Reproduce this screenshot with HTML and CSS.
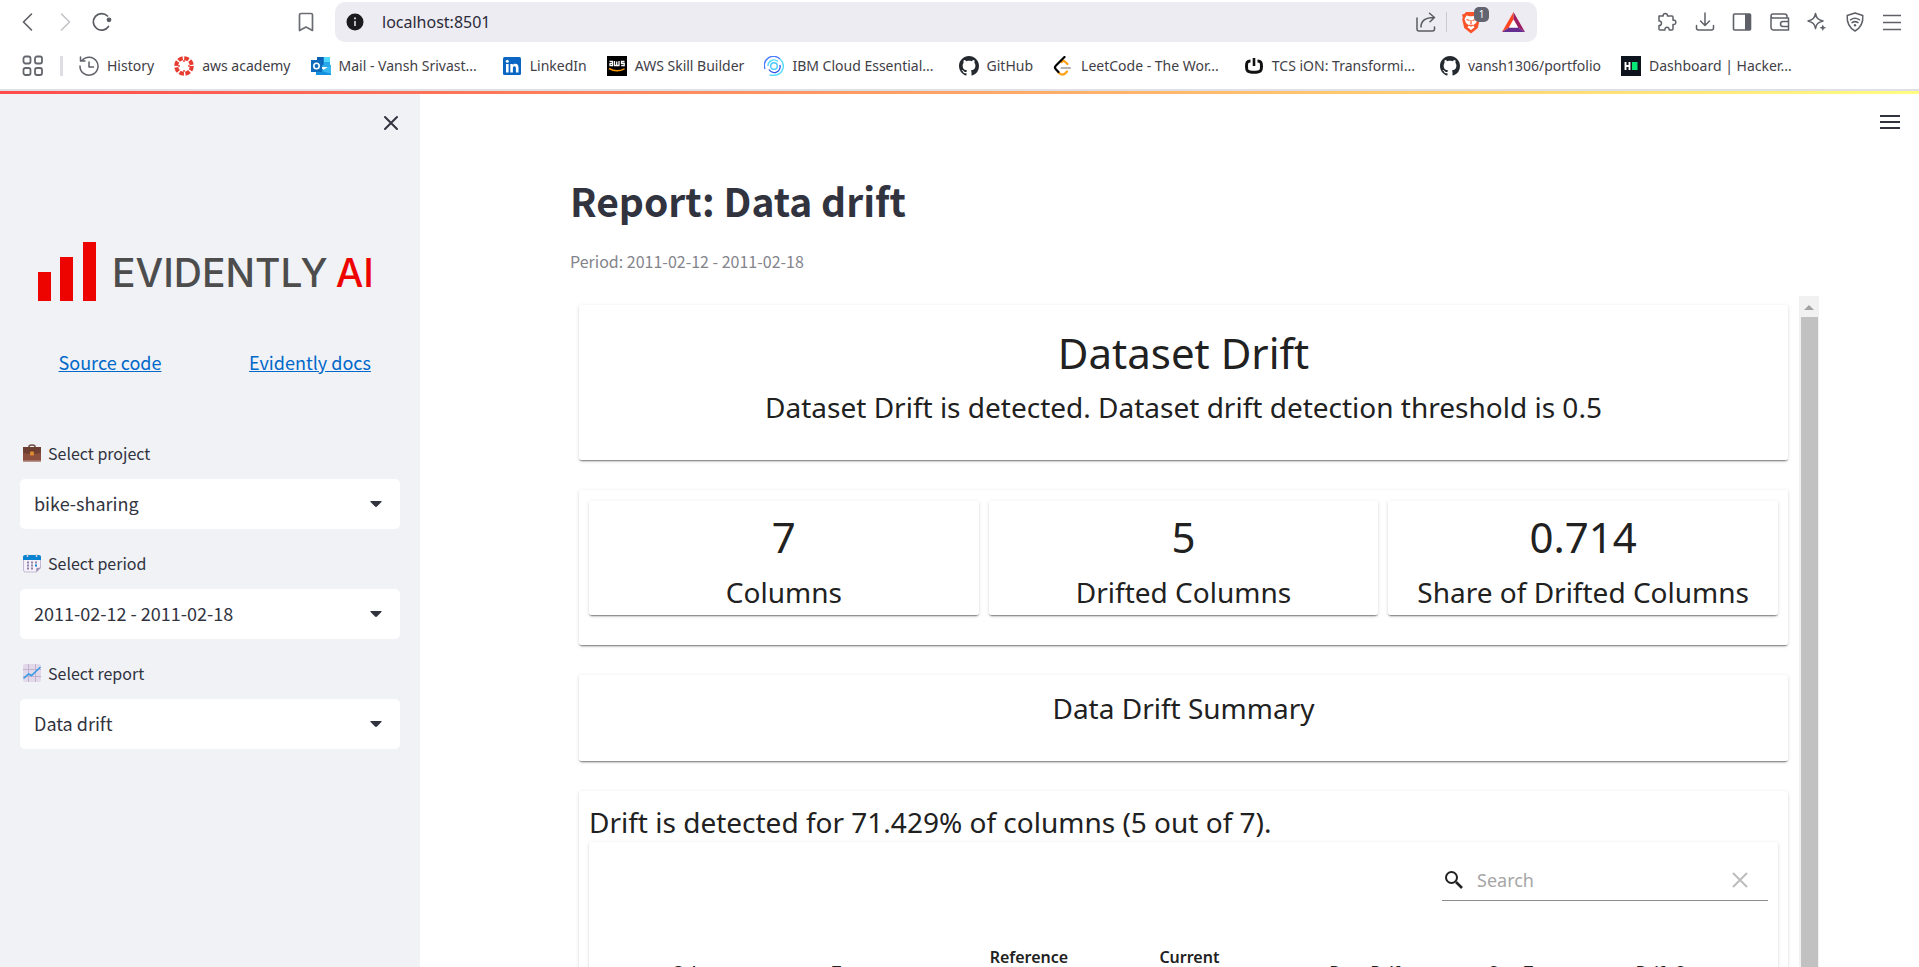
FILE: index.html
```html
<!DOCTYPE html>
<html lang="en">
<head>
<meta charset="utf-8">
<title>Report: Data drift</title>
<link rel="stylesheet" href="styles.css">
</head>
<body>
<svg class="defs" aria-hidden="true">
  <symbol id="github" viewBox="0 0 16 16"><path fill="#24292f" d="M8 0C3.58 0 0 3.58 0 8c0 3.54 2.29 6.53 5.47 7.59.4.07.55-.17.55-.38 0-.19-.01-.82-.01-1.49-2.01.37-2.53-.49-2.69-.94-.09-.23-.48-.94-.82-1.13-.28-.15-.68-.52-.01-.53.63-.01 1.08.58 1.23.82.72 1.21 1.87.87 2.33.66.07-.52.28-.87.51-1.07-1.78-.2-3.64-.89-3.64-3.95 0-.87.31-1.59.82-2.15-.08-.2-.36-1.02.08-2.12 0 0 .67-.21 2.2.82.64-.18 1.32-.27 2-.27s1.36.09 2 .27c1.53-1.04 2.2-.82 2.2-.82.44 1.1.16 1.92.08 2.12.51.56.82 1.27.82 2.15 0 3.07-1.87 3.75-3.65 3.95.29.25.54.73.54 1.48 0 1.07-.01 1.93-.01 2.2 0 .21.15.46.55.38A8.01 8.01 0 0 0 16 8c0-4.42-3.58-8-8-8z"/></symbol>
  <symbol id="caret" viewBox="0 0 12 6"><path fill="#31333f" d="M1 0h10c.6 0 .8.6.4 1L7 5.500c-.5.5-1.500.5-2 0L.6 1C.2.6.4 0 1 0z"/></symbol>
</svg>

<header class="browser">
  <div class="toolbar">
    <nav class="nav-buttons" aria-label="Navigation">
      <button type="button" aria-label="Back"><svg width="20" height="20" viewBox="0 0 20 20"><path d="M13.500 2 5.500 10l8 8" fill="none" stroke="#5a5c63" stroke-width="1.600" stroke-linecap="round" stroke-linejoin="round"/></svg></button>
      <button type="button" aria-label="Forward"><svg width="20" height="20" viewBox="0 0 20 20"><path d="M6.500 2l8 8-8 8" fill="none" stroke="#c2c3c7" stroke-width="1.600" stroke-linecap="round" stroke-linejoin="round"/></svg></button>
      <button type="button" aria-label="Reload"><svg width="20" height="20" viewBox="0 0 20 20"><path d="M15.500 4A8.300 8.300 0 1 0 16.500 14.500" fill="none" stroke="#5a5c63" stroke-width="1.700" stroke-linecap="round"/><circle cx="17" cy="7.800" r="2.400" fill="#5a5c63"/></svg></button>
    </nav>
    <button type="button" class="save" aria-label="Bookmark this page"><svg width="20" height="20" viewBox="0 0 20 20"><path d="M3.500 3a1.500 1.500 0 0 1 1.500-1.500h10A1.500 1.500 0 0 1 16.500 3v15.500L10 15l-6.500 3.500z" fill="none" stroke="#6b6d74" stroke-width="1.700" stroke-linejoin="round"/></svg></button>
    <div class="address">
      <svg width="18" height="18" viewBox="0 0 18 18"><circle cx="9" cy="9" r="8.500" fill="#1b1b1f"/><path d="M9 8v5" stroke="#c9c9d0" stroke-width="1.800"/><circle cx="9" cy="5.400" r="1.100" fill="#c9c9d0"/></svg>
      <input type="text" aria-label="Address" value="localhost:8501">
      <button type="button" aria-label="Share"><svg width="20" height="20" viewBox="0 0 20 20"><g fill="none" stroke="#5a5c63" stroke-width="1.500" stroke-linecap="round" stroke-linejoin="round"><path d="M1 6v11a2 2 0 0 0 2 2h13.500a2 2 0 0 0 2-2v-2"/><path d="M5 15c0-6 4-9.500 13-9.500M13.500 1.200 18.500 5.500 14 9.800"/></g></svg></button>
      <span class="divider"></span>
      <button type="button" class="shields" aria-label="Brave Shields"><svg width="20" height="23" viewBox="0 0 20 23"><path fill="#fb542b" d="M5 1h10l1.800 2 2.200.5-.8 3 .6 2-2 8.500L10 22.500 3.200 17 1.200 8.500l.6-2-.8-3L3.200 3z"/><path fill="#fff" d="m5.500 4.500 3 .7h3l3-.7 2 3.500-1.500 4-3 2.200 1.500 2L10 19l-3.500-2.800 1.500-2L5 12 3.500 8z"/><path fill="none" stroke="#fb542b" stroke-width="1.200" d="m5.500 8.500 3 1M14.500 8.500l-3 1M10 9v4.500M8 14l2 1 2-1"/></svg><span class="badge">1</span></button>
      <button type="button" aria-label="Brave Rewards"><svg width="23" height="20" viewBox="0 0 23 20"><path fill="#ff4724" d="M11.500 0 0 20l7-4.500 4.500-8z"/><path fill="#9e1f63" d="M11.500 0 23 20l-7-4.500-4.500-8z"/><path fill="#662d91" d="M0 20h23l-7-4.500H7z"/><path fill="#fff" d="M11.500 7.500 7 15.500h9z"/></svg></button>
    </div>
    <div class="tools">
      <button type="button" aria-label="Extensions"><svg width="20" height="20" viewBox="0 0 20 20"><path d="M2 4h4.200c-.7-3.300 4.800-3.300 4.200 0H15a1 1 0 0 1 1 1v3.200c3.800-.8 3.800 5 0 4.300V17a1 1 0 0 1-1 1h-2.800c.5-3.700-4.800-3.700-4.300 0H3a1 1 0 0 1-1-1v-3.500c3.300.3 3.300-4.800 0-4.500z" fill="none" stroke="#5f6168" stroke-width="1.500" stroke-linejoin="round"/></svg></button>
      <button type="button" aria-label="Downloads"><svg width="20" height="20" viewBox="0 0 20 20"><path d="M10 1v12M5.500 9l4.500 4.500L14.500 9M1.500 13.500V16a2 2 0 0 0 2 2h13a2 2 0 0 0 2-2v-2.500" fill="none" stroke="#5f6168" stroke-width="1.500" stroke-linecap="round" stroke-linejoin="round"/></svg></button>
      <button type="button" aria-label="Sidebar"><svg width="20" height="20" viewBox="0 0 20 20"><rect x="1.500" y="2" width="17" height="16" rx="1" fill="none" stroke="#5f6168" stroke-width="1.600"/><path fill="#5f6168" d="M13 2h5.500v16H13z"/></svg></button>
      <button type="button" aria-label="Wallet"><svg width="20" height="20" viewBox="0 0 20 20"><g fill="none" stroke="#5f6168" stroke-width="1.500" stroke-linejoin="round"><path d="M1 15.500V4a2 2 0 0 1 2-2h11.500A2.500 2.500 0 0 1 17 4.500V6H3a2 2 0 0 1-2-2M1 15.500A2.500 2.500 0 0 0 3.500 18H18.500V6H16M18.500 9.500h-5.500a2.200 2.200 0 0 0 0 5h5.500"/></g></svg></button>
      <button type="button" aria-label="Leo AI"><svg width="20" height="20" viewBox="0 0 20 20"><path d="M8.500 1.500c.8 4.500 2.500 6.200 7.500 7.500-5 1.300-6.700 3-7.500 7.500C7.700 12 6 10.300 1 9c5-1.300 6.700-3 7.500-7.500z" fill="none" stroke="#5f6168" stroke-width="1.500" stroke-linejoin="round"/><path fill="#5f6168" d="m15.800 12.500 1 2.200 2.400 1-2.400 1-1 2.400-1-2.400-2.300-1 2.300-1z"/></svg></button>
      <button type="button" aria-label="VPN"><svg width="20" height="20" viewBox="0 0 20 20"><g fill="none" stroke="#5f6168" stroke-width="1.500" stroke-linecap="round" stroke-linejoin="round"><path d="M10 1 17.800 3.500c.5 7-1.500 12-7.800 15.500C3.700 15.500 1.700 10.500 2.200 3.500z"/><path d="M5.500 7.800c3-2 6-2 9 0M7 10.600c2-1.300 4-1.300 6 0"/></g><circle cx="10" cy="13.200" r="1.200" fill="#5f6168"/></svg></button>
      <button type="button" aria-label="Menu"><svg width="20" height="20" viewBox="0 0 20 20"><path d="M1 3.500h18M1 10.500h18M1 17.500h18" stroke="#5f6168" stroke-width="1.500"/></svg></button>
    </div>
  </div>

  <nav class="bookmarks" aria-label="Bookmarks">
    <button type="button" aria-label="Tab groups"><svg width="22" height="22" viewBox="0 0 22 22"><g fill="none" stroke="#64666d" stroke-width="1.800"><rect x="1.500" y="1.500" width="7" height="7" rx="2"/><rect x="13" y="1.500" width="7" height="7" rx="2"/><rect x="1.500" y="13" width="7" height="7" rx="2"/><rect x="13" y="13" width="7" height="7" rx="2"/></g></svg></button>
    <span class="divider"></span>
    <a href="#"><svg width="20" height="20" viewBox="0 0 20 20"><g fill="none" stroke="#5f6168" stroke-width="1.500" stroke-linecap="round" stroke-linejoin="round"><path d="M3 4.500A9 9 0 1 1 1 10M1.500 1v4h4.500M10 6v5h4.500"/></g></svg>History</a>
    <a href="#"><svg width="20" height="20" viewBox="0 0 20 20"><circle cx="10" cy="10" r="7.800" fill="none" stroke="#e63b2e" stroke-width="4" stroke-dasharray="4.600 1.526"/><g fill="#e63b2e"><circle cx="10" cy="5" r=".9"/><circle cx="15" cy="10" r=".9"/><circle cx="10" cy="15" r=".9"/><circle cx="5" cy="10" r=".9"/></g></svg>aws academy</a>
    <a href="#" class="clipped"><svg width="20" height="20" viewBox="0 0 20 20"><path fill="#28a8ea" d="M6 1h13v10H6z"/><path fill="#0a5fb4" d="M6 1h6.500v8H6z"/><path fill="#50d9ff" d="M13 1h6v5h-6z"/><path fill="#1490df" d="M5 9l8 5 7-5v10H5z"/><path fill="#35b8f1" d="m20 9-9 6 9 3z"/><path fill="#0f6cbd" d="M0 4h11v12H0z"/><circle cx="5.500" cy="10" r="2.700" fill="none" stroke="#fff" stroke-width="1.600"/></svg>Mail - Vansh Srivast...</a>
    <a href="#"><svg width="20" height="20" viewBox="0 0 20 20"><rect x="1" y="1" width="18" height="18" rx="1.500" fill="#0a66c2"/><g fill="#fff"><circle cx="5.300" cy="5.200" r="1.500"/><path d="M4 8h2.600v8.500H4zM8.300 8h2.500v1.200c1.300-2.200 5.700-2.100 5.700 2.200v5.100h-2.600v-4.600c0-2.300-3-2.200-3 .1v4.500H8.300z"/></g></svg>LinkedIn</a>
    <a href="#"><svg width="20" height="20" viewBox="0 0 20 20"><path d="M0 0h20v20H0z"/><g fill="none" stroke="#fff" stroke-width="1.300"><path d="M2.500 5.500h3v4.200H3V7.600h2.500M7.500 5v4.500h2.200V5.500v4H12V5M17.500 5.500h-3v2h2.700v2.200h-3"/></g><path fill="none" stroke="#f90" stroke-width="1.500" d="M2 12.500c5 3 10.500 3 15.500.3"/></svg>AWS Skill Builder</a>
    <a href="#" class="clipped"><svg width="20" height="20" viewBox="0 0 20 20"><g fill="none" stroke-width="1.400"><path stroke="#4a7cff" d="M1 13A9.200 9.200 0 0 1 16 3"/><path stroke="#55dcff" d="M16 3a9.200 9.200 0 0 1-5 16.200H5.500M4 10a6 6 0 0 1 10-4.500"/><path stroke="#2f56e8" d="M16 9a6 6 0 0 1-11 4.500"/><circle cx="10" cy="10" r="3.300" stroke="#48c9ff"/></g></svg>IBM Cloud Essential...</a>
    <a href="#"><svg width="20" height="20"><use href="#github"/></svg>GitHub</a>
    <a href="#" class="clipped"><svg width="20" height="20" viewBox="0 0 20 20"><g fill="none" stroke-width="2.200" stroke-linecap="round" stroke-linejoin="round"><path stroke="#ffa116" d="M8.500 6l2-1.500 4 3.500M5 16c3 3.500 6 3.500 9-.500"/><path stroke="#b3b3b3" d="M8.500 12h8.500"/><path stroke="#000" d="M11.500 1 3 9.500c-1.500 1.500-1.500 2.500 0 4L5.500 16"/></g></svg>LeetCode - The Wor...</a>
    <a href="#" class="clipped"><svg width="20" height="20" viewBox="0 0 20 20"><path d="M6.500 5C3 5 2.500 6.500 2.500 10.500S3 16.200 10 16.200s7.500-1.700 7.500-5.700S17 5 13.500 5" fill="none" stroke="#111" stroke-width="3"/><path d="M10 2v8" stroke="#111" stroke-width="2.600"/></svg>TCS iON: Transformi...</a>
    <a href="#"><svg width="20" height="20"><use href="#github"/></svg>vansh1306/portfolio</a>
    <a href="#" class="clipped"><svg width="20" height="20" viewBox="0 0 20 20"><path fill="#0e141e" d="M0 0h20v20H0z"/><path fill="none" stroke="#fff" stroke-width="1.900" d="M4.500 6v8M8.500 6v8M4.500 10h4"/><path fill="#05e776" d="M11 6h5.500v8H11z"/></svg>Dashboard | Hacker...</a>
  </nav>
</header>

<div class="app">
  <aside class="sidebar">
    <button type="button" class="close" aria-label="Close sidebar"><svg width="16" height="16" viewBox="0 0 16 16"><path d="m2 2 12 12M14 2 2 14" stroke="#31333f" stroke-width="2" stroke-linecap="round"/></svg></button>
    <div class="logo">
      <svg width="60" height="60" viewBox="0 0 60 60" fill="#ed0400"><path d="M1 30h13v29H1zM23 15h13v44H23zM46 0h13v59H46z"/></svg>
      <span class="wordmark"><span>EVIDENTLY</span> <span class="accent">AI</span></span>
    </div>
    <div class="links">
      <a href="#">Source code</a>
      <a href="#">Evidently docs</a>
    </div>
    <form class="filters">
      <div class="field">
        <label for="project"><svg width="20" height="20" viewBox="0 0 20 20"><path d="M7 5V3.500C7 1.500 13 1.500 13 3.500V5" fill="none" stroke="#6b4a3e" stroke-width="1.500"/><rect x="1" y="4" width="18" height="15" rx="1.500" fill="#8b4f3d"/><path fill="#6d3f31" d="M1 4h18v5.500c-6 2-12 2-18 0z"/><path fill="#b9968c" d="M1 17.500h18V19H1z"/><rect x="8" y="8.500" width="4" height="4" rx="1" fill="#e08a2e"/></svg>Select project</label>
        <div class="select"><select id="project"><option>bike-sharing</option></select><svg width="12" height="6"><use href="#caret"/></svg></div>
      </div>
      <div class="field">
        <label for="period"><svg width="20" height="20" viewBox="0 0 20 20"><path fill="#f5f0fa" stroke="#c5b9d2" d="M1.500 4h17v11l-4 4h-11a2 2 0 0 1-2-2z"/><path fill="#0a84d0" d="M1 4a2 2 0 0 1 2-2h14a2 2 0 0 1 2 2v3H1z"/><path fill="#9d8eae" d="m14 19 .5-4 4.500-.5z"/><path stroke="#d5d0dc" stroke-width="1.500" d="M5.500 1v3M14.500 1v3"/><path stroke="#9282a6" stroke-width="2" stroke-dasharray="2 2" d="M5 9.500h10M5 12.500h8M5 15.500h8"/><path fill="#0a84d0" d="M13 11.500h2v2h-2z"/></svg>Select period</label>
        <div class="select"><select id="period"><option>2011-02-12 - 2011-02-18</option></select><svg width="12" height="6"><use href="#caret"/></svg></div>
      </div>
      <div class="field">
        <label for="report"><svg width="20" height="20" viewBox="0 0 20 20"><rect x="1" y="1" width="18" height="18" rx="2" fill="#e1d8ea"/><path stroke="#c2b2cf" d="M6.500 1v18M13.500 1v18M1 6.500h18M1 13.500h18"/><path d="m1.500 15.500 5-4.500 3 1.500L18.500 4" fill="none" stroke="#2f9be6" stroke-width="1.500"/></svg>Select report</label>
        <div class="select"><select id="report"><option>Data drift</option></select><svg width="12" height="6"><use href="#caret"/></svg></div>
      </div>
    </form>
  </aside>

  <main class="main">
    <button type="button" class="app-menu" aria-label="App menu"><svg width="20" height="14" viewBox="0 0 20 14"><path d="M0 1h20M0 7h20M0 13h20" stroke="#31333f" stroke-width="2"/></svg></button>
    <h1>Report: Data drift</h1>
    <p class="caption">Period: 2011-02-12 - 2011-02-18</p>
    <div class="frame">
      <div class="report">
        <section class="card intro">
          <h2>Dataset Drift</h2>
          <p>Dataset Drift is detected. Dataset drift detection threshold is 0.5</p>
        </section>
        <section class="card counters">
          <div class="counter"><strong>7</strong><span>Columns</span></div>
          <div class="counter"><strong>5</strong><span>Drifted Columns</span></div>
          <div class="counter"><strong>0.714</strong><span>Share of Drifted Columns</span></div>
        </section>
        <section class="card summary">
          <h3>Data Drift Summary</h3>
        </section>
        <section class="card details">
          <h3>Drift is detected for 71.429% of columns (5 out of 7).</h3>
          <div class="paper">
            <div class="table-tools">
              <div class="search">
                <svg width="24" height="24" viewBox="0 0 24 24"><circle cx="9.500" cy="9.500" r="5.500" fill="none" stroke="#212121" stroke-width="2"/><path d="m14 14 6 6" stroke="#212121" stroke-width="2.600"/></svg>
                <input type="text" placeholder="Search" aria-label="Search">
                <button type="button" aria-label="Clear search"><svg width="16" height="16" viewBox="0 0 16 16"><path d="m1 1 14 14M15 1 1 15" stroke="#bdbdbd" stroke-width="2"/></svg></button>
              </div>
            </div>
            <table>
              <colgroup><col class="c-toggle"><col class="c-column"><col class="c-type"><col class="c-reference"><col class="c-current"><col class="c-drift"><col class="c-test"><col class="c-score"></colgroup>
              <thead><tr><td></td><th>Column</th><th>Type</th><th>Reference<br>Distribution</th><th>Current<br>Distribution</th><th>Data Drift</th><th>Stat Test</th><th>Drift Score</th></tr></thead>
            </table>
          </div>
        </section>
      </div>
      <div class="scrollbar" aria-hidden="true"><svg width="20" height="21" viewBox="0 0 20 21"><path fill="#a3a3a3" d="M10 9 15 14H5z"/></svg><div class="thumb"></div></div>
    </div>
  </main>
</div>
</body>
</html>
```

FILE: styles.css
```css
:root {
  --source: "Noto Sans CJK SC", "Noto Sans", sans-serif;
  --ui: "Noto Sans", "Open Sans", sans-serif;
  --ink: #31333f;
}
* { box-sizing: border-box; }
body {
  margin: 0;
  height: 100vh;
  display: flex;
  flex-direction: column;
  overflow: hidden;
  background: #fff;
  font-family: var(--source);
  color: var(--ink);
}
button { padding: 0; border: 0; background: none; display: flex; align-items: center; justify-content: center; }
svg { display: block; flex: none; }
h1, h2, h3, p { margin: 0; }
.defs { position: absolute; width: 0; height: 0; }

/* browser chrome */
.browser { flex: none; font-family: var(--ui); border-bottom: 2px solid #dfe0e6; }
.toolbar { display: flex; align-items: center; height: 44px; padding: 0 17px 0 18px; }
.nav-buttons { display: flex; gap: 17px; }
.save { margin-left: 184px; margin-right: 19px; }
.address {
  flex: 1;
  display: flex;
  align-items: center;
  height: 40px;
  margin-right: 120px;
  padding: 0 12px 0 11px;
  border-radius: 10px;
  background: #edecf2;
}
.address input {
  flex: 1;
  min-width: 0;
  margin-left: 18px;
  padding: 0;
  border: 0;
  background: none;
  font: 16px var(--ui);
  color: #2b2b3a;
}
.address .divider { width: 1px; height: 20px; margin: 0 14px 0 10px; background: #c9c9d1; }
.shields { position: relative; margin-right: 21px; }
.badge {
  position: absolute;
  left: 13px;
  top: -4px;
  width: 15px;
  height: 15px;
  border-radius: 5px;
  background: #62646f;
  color: #fff;
  font: 10px/15px var(--ui);
  text-align: center;
}
.tools { display: flex; justify-content: space-between; width: 245px; }
.bookmarks { display: flex; align-items: center; height: 45px; padding: 0 22px 2px; gap: 20px; }
.bookmarks .divider { width: 3px; height: 20px; margin: 0 -4px; background: #dddde3; }
.bookmarks a {
  display: flex;
  align-items: center;
  gap: 8px;
  white-space: nowrap;
  font-size: 14px;
  line-height: 20px;
  color: #3f4047;
  text-decoration: none;
}
.bookmarks .clipped { padding-right: 5px; }

/* application */
.app { flex: 1; min-height: 0; display: flex; border-top: 3px solid; border-image: linear-gradient(90deg, #ff4b4b, #fffd80) 1; }
.sidebar { flex: none; width: 420px; padding: 20px; background: #f0f2f6; }
.close { margin: 0 0 0 auto; width: 18px; height: 18px; }
.logo { display: flex; align-items: center; gap: 15px; margin: 109px 0 0 17px; }
.wordmark { display: flex; gap: 8px; padding-top: 2px; font: 500 39px/60px Inter, sans-serif; color: #4d4d4d; white-space: nowrap; }
.accent { color: #ed0400; }
.links { display: grid; grid-template-columns: 1fr 1fr; gap: 20px; margin-top: 43px; text-align: center; font-size: 18px; line-height: 32px; }
.links a { color: #0068c9; }
.filters { margin-top: 61px; display: grid; gap: 20px; }
.field label { display: flex; align-items: center; gap: 6px; height: 30px; padding: 0 0 2px 2px; margin-bottom: 10px; font-size: 16px; }
.select { position: relative; }
.select select {
  appearance: none;
  display: block;
  width: 100%;
  height: 50px;
  padding: 0 40px 2px 14px;
  border: 0;
  border-radius: 5px;
  background: #fff;
  font: 18px var(--source);
  color: var(--ink);
}
.select svg { position: absolute; right: 18px; top: 22px; }

.main { position: relative; flex: 1; min-width: 0; display: flex; flex-direction: column; padding: 73px 100px 0 150px; }
.app-menu { position: absolute; right: 19px; top: 21px; }
h1 { font-size: 39px; line-height: 66px; font-weight: 700; }
.caption { margin-top: 15px; font-size: 16px; line-height: 26px; color: #83848c; }
.frame { flex: 1; min-height: 0; margin-top: 22px; display: flex; }
.report { flex: 1; min-width: 0; overflow: hidden; padding: 9px 11px 0 9px; display: grid; gap: 30px; align-content: start; font-family: var(--ui); color: #212121; }
.scrollbar { flex: none; width: 20px; display: flex; flex-direction: column; align-items: center; background: #f1f1f1; }
.thumb { flex: 1; width: 17px; background: #c1c1c1; }

.card, .counter, .paper {
  background: #fff;
  border-radius: 2px;
  box-shadow: 0 3px 2px -2px rgba(0, 0, 0, .3), 0 1px 1px rgba(0, 0, 0, .25), 0 1px 4px rgba(0, 0, 0, .12);
}
.intro { padding: 21px 10px 33px; text-align: center; }
h2, .counter strong { font-size: 42px; line-height: 54px; font-weight: 400; }
h3, .intro p, .counter span { font-size: 28px; line-height: 40px; font-weight: 400; }
.intro p { margin-top: 7px; }
.counters { display: grid; grid-template-columns: repeat(3, 1fr); gap: 10px; padding: 11px 10px 30px; }
.counter { display: flex; flex-direction: column; align-items: center; padding: 9px 10px 3px; gap: 8px; }
.summary { padding: 13px 10px 33px; text-align: center; }
.details { padding: 11px 10px; }
.paper { min-height: 300px; }
.table-tools { display: flex; justify-content: flex-end; height: 80px; padding: 18px 10px 0; }
.search { display: flex; align-items: center; width: 326px; height: 41px; padding: 0 20px 0 0; border-bottom: 1px solid #8d8d8d; }
.search input { flex: 1; min-width: 0; margin-left: 11px; padding: 0; border: 0; background: none; font: 18px var(--ui); color: #212121; }
.search input::placeholder { color: #a6a6a6; }
table { width: 100%; table-layout: fixed; border-collapse: collapse; }
th { padding: 20px 0; font-size: 16px; line-height: 30px; font-weight: 600; text-align: center; white-space: nowrap; }
.c-toggle { width: 5%; }
.c-column { width: 9%; }
.c-type { width: 16%; }
.c-reference { width: 14%; }
.c-current { width: 13%; }
.c-drift { width: 17%; }
.c-test { width: 9%; }
.c-score { width: 17%; }
```
